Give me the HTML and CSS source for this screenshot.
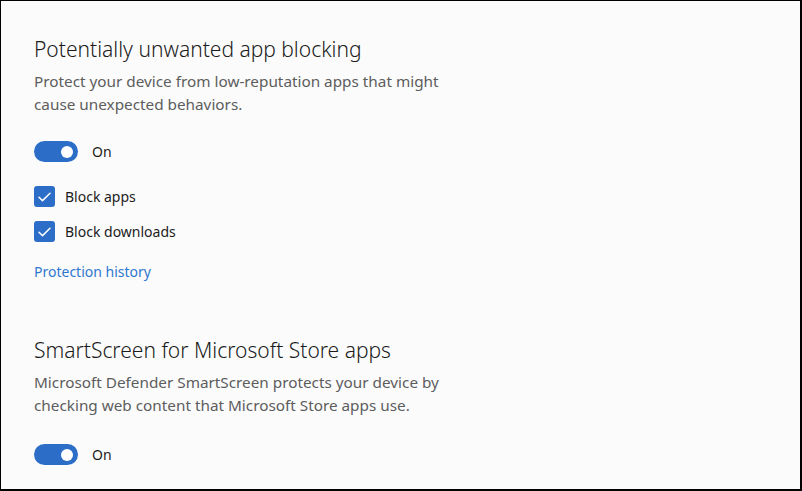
FILE: index.html
```html
<!DOCTYPE html>
<html>
<head>
<meta charset="utf-8">
<link rel="stylesheet" href="styles.css">
</head>
<body>
<div class="frame">
  <section class="section">
    <h2 class="title">Potentially unwanted app blocking</h2>
    <p class="desc">Protect your device from low-reputation apps that might cause unexpected behaviors.</p>
    <div class="toggle-row">
      <span class="toggle"><span class="knob"></span></span>
      <span class="toggle-label">On</span>
    </div>
    <div class="checks">
      <label class="check">
        <span class="box"><svg width="13" height="10" viewBox="0 0 13 10"><path d="M1 5.3 L4.5 8.6 L12 1.2" fill="none" stroke="#fff" stroke-width="1.5" stroke-linecap="round" stroke-linejoin="round"/></svg></span>
        <span>Block apps</span>
      </label>
      <label class="check">
        <span class="box"><svg width="13" height="10" viewBox="0 0 13 10"><path d="M1 5.3 L4.5 8.6 L12 1.2" fill="none" stroke="#fff" stroke-width="1.5" stroke-linecap="round" stroke-linejoin="round"/></svg></span>
        <span>Block downloads</span>
      </label>
    </div>
    <a class="link" href="#">Protection history</a>
  </section>
  <section class="section second">
    <h2 class="title">SmartScreen for Microsoft Store apps</h2>
    <p class="desc">Microsoft Defender SmartScreen protects your device by checking web content that Microsoft Store apps use.</p>
    <div class="toggle-row last">
      <span class="toggle"><span class="knob"></span></span>
      <span class="toggle-label">On</span>
    </div>
  </section>
</div>
</body>
</html>
```

FILE: styles.css
```css
* { box-sizing: border-box; }
html, body { margin: 0; padding: 0; }
body {
  width: 802px;
  height: 491px;
  overflow: hidden;
  font-family: "Noto Sans", "Open Sans", sans-serif;
  color: #1b1b1b;
}
.frame {
  width: 802px;
  height: 491px;
  background: #fbfbfb;
  border-top: 1px solid #000;
  border-left: 1px solid #000;
  border-right: 2px solid #000;
  border-bottom: 2px solid #000;
  padding: 34px 0 0 33px;
}
.section { display: flex; flex-direction: column; align-items: flex-start; }
.title {
  margin: 0;
  font-size: 21px;
  font-weight: 350;
  line-height: 28px;
  color: #1b1b1b;
}
.desc {
  margin: 7px 0 0 0;
  width: 430px;
  font-size: 15.3px;
  line-height: 23px;
  color: #5d5d5d;
}
.toggle-row {
  display: flex;
  align-items: center;
  gap: 14px;
  margin-top: 25px;
  font-size: 14px;
  color: #1b1b1b;
}
.toggle-row.last { margin-top: 27px; }
.toggle {
  width: 44px;
  height: 21px;
  border-radius: 11px;
  background: #2c6dc8;
  display: flex;
  align-items: center;
  justify-content: flex-end;
  padding-right: 5px;
}
.knob {
  width: 12px;
  height: 12px;
  border-radius: 50%;
  background: #fff;
}
.checks {
  display: flex;
  flex-direction: column;
  gap: 14px;
  margin-top: 24px;
}
.check {
  display: flex;
  align-items: center;
  gap: 10px;
  font-size: 14px;
  line-height: 20px;
  color: #1b1b1b;
}
.box {
  width: 21px;
  height: 21px;
  border-radius: 3px;
  background: #2c6dc8;
  display: flex;
  align-items: center;
  justify-content: center;
}
.link {
  margin-top: 20px;
  font-size: 14px;
  color: #2f78cf;
  text-decoration: none;
}
.second { margin-top: 55px; }
```
